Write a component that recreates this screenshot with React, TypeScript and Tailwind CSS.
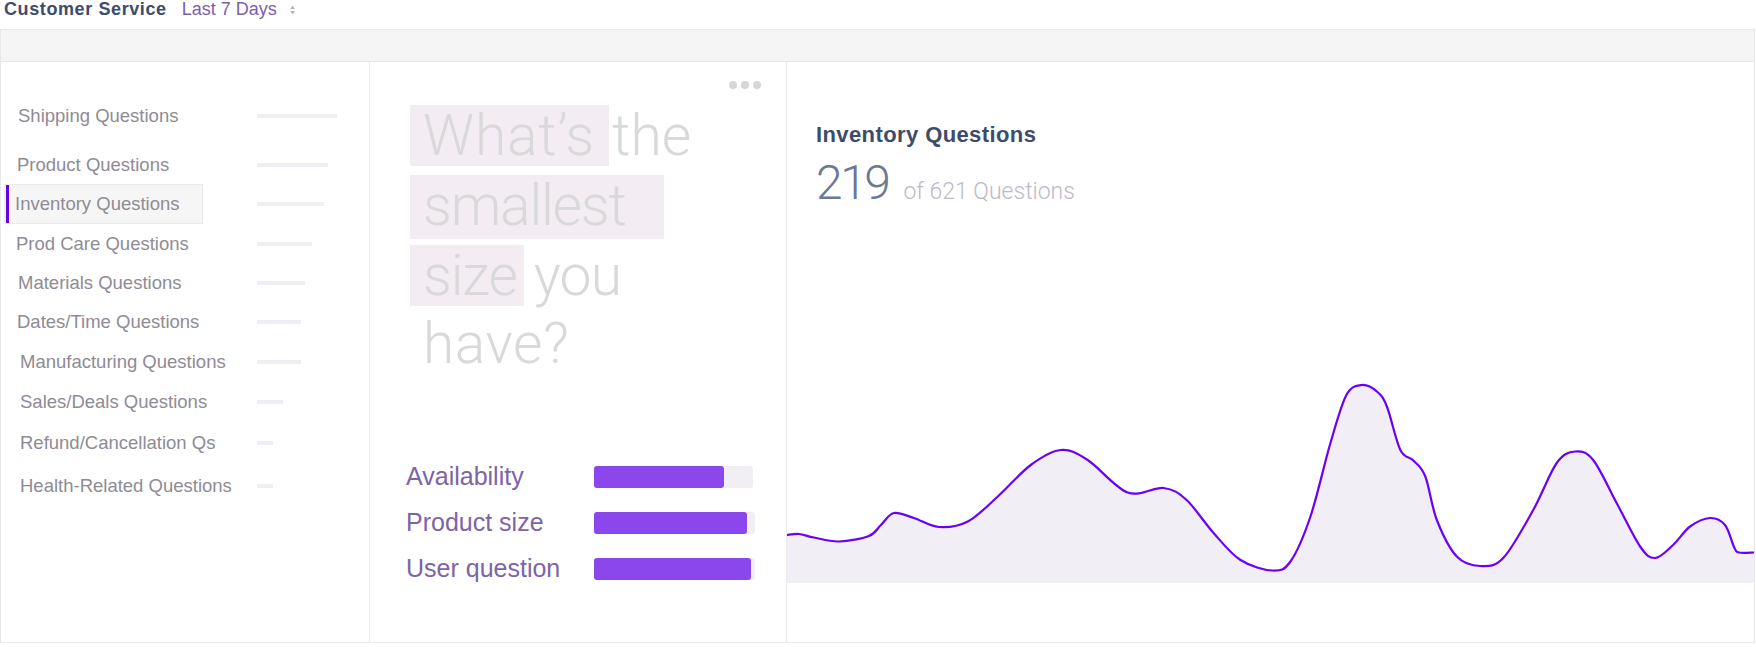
import React from "react";

type Pt = [number, number];

const chartPts: Pt[] = [
  [0, 185], [12, 184], [27, 187.5], [52, 191.5], [82, 186], [94, 175], [107, 163],
  [127, 168], [152, 177], [181, 171.5], [211, 146.5], [244, 115], [274, 100],
  [301, 110], [341, 142.5], [377, 138], [400, 150], [427, 183], [454, 210],
  [486, 220.5], [504, 211.5], [524, 166.5], [544, 93], [560, 45], [575.5, 35],
  [590.5, 41.5], [600.5, 56.5], [614, 100], [627, 110.5], [639, 126.5],
  [650.5, 170], [670.5, 206.5], [694, 216], [717, 208], [747, 160], [770.5, 113],
  [789, 101.5], [807, 110], [830.5, 153], [854, 196.5], [869, 208], [887, 195],
  [904, 176.5], [924, 168], [939, 175], [948, 197], [953, 202.5], [968, 202.5],
];

function smoothPath(p: Pt[]): string {
  let d = `M${p[0][0]},${p[0][1]}`;
  for (let i = 0; i < p.length - 1; i++) {
    const p0 = p[i - 1] || p[i];
    const p1 = p[i];
    const p2 = p[i + 1];
    const p3 = p[i + 2] || p[i + 1];
    const c1x = p1[0] + (p2[0] - p0[0]) / 6;
    const c1y = p1[1] + (p2[1] - p0[1]) / 6;
    const c2x = p2[0] - (p3[0] - p1[0]) / 6;
    const c2y = p2[1] - (p3[1] - p1[1]) / 6;
    d += ` C${c1x.toFixed(2)},${c1y.toFixed(2)} ${c2x.toFixed(2)},${c2y.toFixed(2)} ${p2[0]},${p2[1]}`;
  }
  return d;
}

const linePath = smoothPath(chartPts);
const areaPath = `${linePath} L968,233 L0,233 Z`;

type Row = {
  label: string;
  bar: number;
  row: string;
  pad: string;
  active?: boolean;
};

const rows: Row[] = [
  { label: "Shipping Questions", bar: 80, row: "h-[40px]", pad: "pl-[17px]" },
  { label: "Product Questions", bar: 71, row: "mt-[9px] h-[39px]", pad: "pl-[16px]" },
  { label: "Inventory Questions", bar: 67, row: "h-[40px]", pad: "pl-[3px]", active: true },
  { label: "Prod Care Questions", bar: 55, row: "h-[39px]", pad: "pl-[15px]" },
  { label: "Materials Questions", bar: 48, row: "h-[39px]", pad: "pl-[17px]" },
  { label: "Dates/Time Questions", bar: 44, row: "h-[40px]", pad: "pl-[16px]" },
  { label: "Manufacturing Questions", bar: 44, row: "h-[40px]", pad: "pl-[19px]" },
  { label: "Sales/Deals Questions", bar: 26, row: "h-[40px]", pad: "pl-[19px]" },
  { label: "Refund/Cancellation Qs", bar: 16, row: "mt-[1px] h-[40px]", pad: "pl-[19px]" },
  { label: "Health-Related Questions", bar: 16, row: "mt-[3px] h-[40px]", pad: "pl-[19px]" },
];

const bars = [
  { label: "Availability", track: 159, fill: 130 },
  { label: "Product size", track: 161, fill: 153 },
  { label: "User question", track: 161, fill: 157 },
];

function SortIcon() {
  return (
    <svg width="5" height="10" viewBox="0 0 5 10" className="ml-[13px]">
      <path d="M0 4 L2.5 0.5 L5 4 Z" fill="#b9b9b9" />
      <path d="M0 6 L2.5 9.5 L5 6 Z" fill="#b9b9b9" />
    </svg>
  );
}

export default function App() {
  return (
    <div className="w-[1756px] h-[647px] bg-white font-['Liberation_Sans',Arial,sans-serif] overflow-hidden">
      {/* Header */}
      <div className="h-[29px] flex items-baseline pl-[4px]">
        <span className="text-[18px] leading-[18px] font-bold tracking-[0.6px] text-[#3d4c6d]">
          Customer Service
        </span>
        <span className="ml-[15px] text-[18px] leading-[18px] text-[#7b61a8]">Last 7 Days</span>
        <SortIcon />
      </div>

      {/* Container */}
      <div className="w-[1755px] border-x border-[#e8e8e8]">
        <div className="h-[33px] bg-[#f5f5f5] border-y border-[#e6e6e6]" />

        <div className="flex h-[581px] border-b border-[#e9e9e9]">
          {/* Left list */}
          <div className="w-[369px] shrink-0 border-r border-[#ececec] pt-[34px] text-[18.5px] text-[#8f8b94]">
            {rows.map((r) => (
              <div key={r.label} className={`flex items-center ${r.row}`}>
                <div className={`w-[256px] shrink-0 h-full flex items-center ${r.pad}`}>
                  {r.active ? (
                    <div className="h-full w-[199px] flex items-stretch border border-[#ebebeb] bg-[#f6f6f6]">
                      <div className="ml-[1px] w-[3px] bg-[#6200ea]" />
                      <span className="ml-[6px] self-center">{r.label}</span>
                    </div>
                  ) : (
                    <span>{r.label}</span>
                  )}
                </div>
                <div className="h-[4px] bg-[#efeef4]" style={{ width: r.bar }} />
              </div>
            ))}
          </div>

          {/* Middle panel */}
          <div className="w-[417px] shrink-0 border-r border-[#ececec] flex flex-col">
            <div className="flex justify-end pt-[19px] pr-[25px] gap-[4px]">
              <span className="w-[8px] h-[8px] rounded-full bg-[#d6d6d6]" />
              <span className="w-[8px] h-[8px] rounded-full bg-[#d6d6d6]" />
              <span className="w-[8px] h-[8px] rounded-full bg-[#d6d6d6]" />
            </div>

            <div className="mt-[16px] pl-[40px] font-['Roboto',sans-serif] font-light text-[57px] text-[#d9d9d9] whitespace-nowrap">
              <div className="flex h-[70px] items-start">
                <span className="h-[61px] leading-[61px] bg-[#f3ecf3] pl-[13px] pr-[14px] tracking-[0.8px]">What’s</span>
                <span className="leading-[61px] pl-[3px]">the</span>
              </div>
              <div className="flex h-[70px] items-start">
                <span className="h-[64px] leading-[61px] bg-[#f3ecf3] pl-[13px] pr-[38px] tracking-[-1.2px]">smallest</span>
              </div>
              <div className="flex h-[70px] items-start">
                <span className="h-[61px] leading-[61px] bg-[#f3ecf3] pl-[13px] pr-[7px] tracking-[-1.2px]">size</span>
                <span className="leading-[61px] pl-[10px] tracking-[-0.8px]">you</span>
              </div>
              <div className="flex h-[70px] items-start">
                <span className="leading-[58px] pl-[13px] tracking-[0.5px]">have?</span>
              </div>
            </div>

            <div className="mt-[69px] pl-[36px]">
              {bars.map((b) => (
                <div key={b.label} className="flex items-center h-[46px]">
                  <span className="w-[188px] shrink-0 text-[25px] text-[#7d64a8]">{b.label}</span>
                  <div className="h-[22px] rounded-[3px] bg-[#f1eff4]" style={{ width: b.track }}>
                    <div className="h-full rounded-[3px] bg-[#8b46ec]" style={{ width: b.fill }} />
                  </div>
                </div>
              ))}
            </div>
          </div>

          {/* Right panel */}
          <div className="flex-1 flex flex-col">
            <div className="pt-[62px] pl-[29px]">
              <div className="text-[22px] leading-[22px] font-bold tracking-[0.4px] text-[#3d4c6b]">
                Inventory Questions
              </div>
              <div className="mt-[13px] flex items-baseline font-['Roboto',sans-serif] font-light">
                <span className="text-[48px] leading-[48px] tracking-[-2.5px] text-[#6c7894]">219</span>
                <span className="ml-[15px] text-[23px] text-[#bcb9c8]">of 621 Questions</span>
              </div>
            </div>
            <div className="mt-auto mb-[59px]">
              <svg width="967" height="233" viewBox="0 0 968 233" preserveAspectRatio="none" className="block">
                <path d={areaPath} fill="#f1eef5" />
                <path d={linePath} fill="none" stroke="#6a00f4" strokeWidth="2.2" strokeLinejoin="round" />
              </svg>
            </div>
          </div>
        </div>
      </div>
    </div>
  );
}
